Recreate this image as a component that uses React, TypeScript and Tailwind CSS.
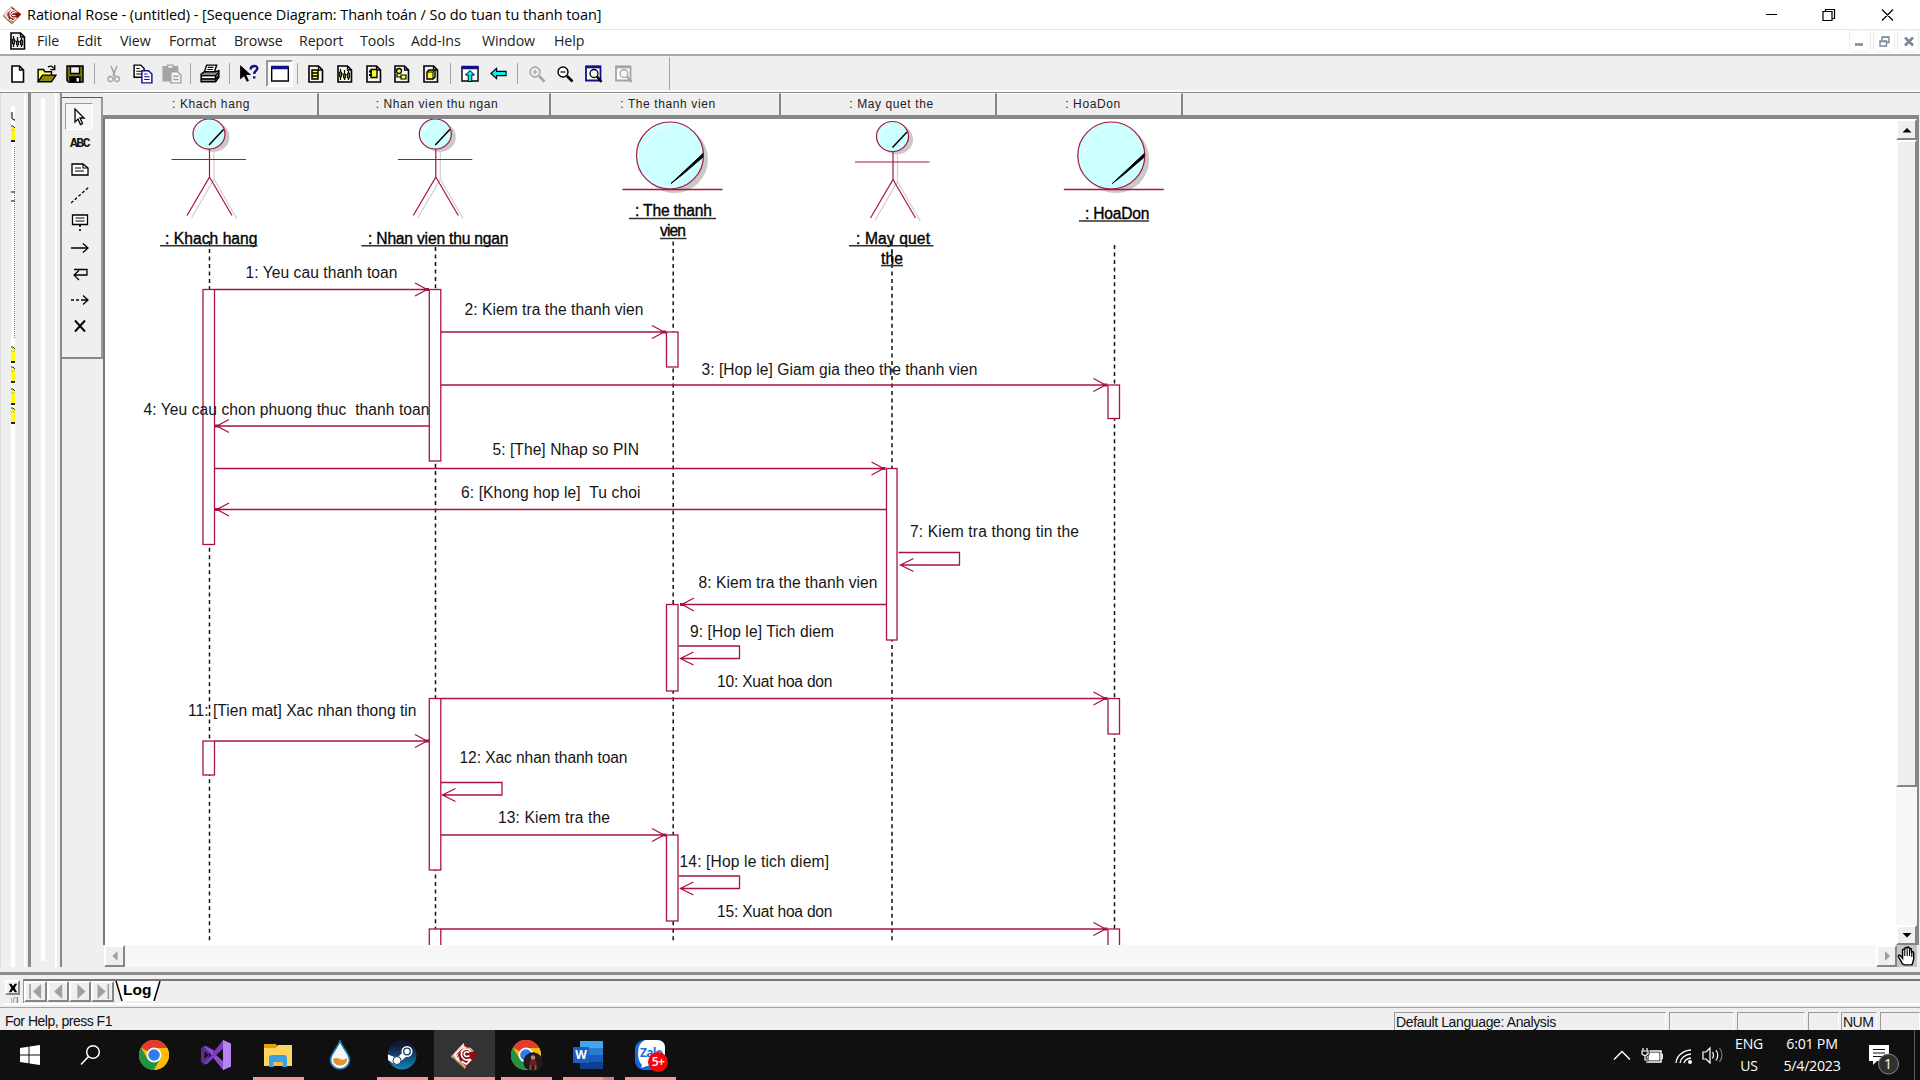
import React from "react";

type P = { children?: React.ReactNode; className?: string };

/* ---------- sequence diagram data ---------- */

const RED = "#a8143e";

type Msg = { t: string; x: number; w: number; by: number };
const labels: Msg[] = [
  { t: "1: Yeu cau thanh toan", x: 245.5, w: 152, by: 277.5 },
  { t: "2: Kiem tra the thanh vien", x: 464.5, w: 179, by: 315 },
  { t: "3: [Hop le] Giam gia theo the thanh vien", x: 701.5, w: 276, by: 375 },
  { t: "4: Yeu cau chon phuong thuc\u00a0 thanh toan", x: 143.5, w: 286, by: 415 },
  { t: "5: [The] Nhap so PIN", x: 492.5, w: 146.5, by: 455 },
  { t: "6: [Khong hop le]\u00a0 Tu choi", x: 461, w: 179.5, by: 497.5 },
  { t: "7: Kiem tra thong tin the", x: 910, w: 169, by: 536.5 },
  { t: "8: Kiem tra the thanh vien", x: 698.5, w: 179, by: 588 },
  { t: "9: [Hop le] Tich diem", x: 690, w: 144, by: 636.5 },
  { t: "10: Xuat hoa don", x: 717, w: 115.5, by: 686.5 },
  { t: "11: [Tien mat] Xac nhan thong tin", x: 188, w: 228.5, by: 715.5 },
  { t: "12: Xac nhan thanh toan", x: 459.5, w: 168, by: 763 },
  { t: "13: Kiem tra the", x: 498, w: 112, by: 823 },
  { t: "14: [Hop le tich diem]", x: 679.5, w: 149.5, by: 867 },
  { t: "15: Xuat hoa don", x: 717, w: 115.5, by: 917 },
];

const arrows: [number, number, number][] = [
  [215, 429, 289.5],
  [441, 666, 332],
  [441, 1107.5, 385],
  [429, 215, 426],
  [215, 885.5, 468.5],
  [886, 215, 509.5],
  [886, 680, 604.5],
  [441, 1107.5, 698.5],
  [215, 429, 741],
  [441, 666, 835],
  [441, 1107.5, 929],
];

const selfCalls: [number, number, number][] = [
  [898.5, 959.5, 552.5],
  [678.5, 739.5, 646],
  [440.5, 502, 782.5],
  [678.5, 739.5, 876],
];

const bars: [number, number, number][] = [
  [203, 289.5, 544.5],
  [203, 741, 775],
  [429.3, 289.5, 461],
  [429.3, 698.5, 870],
  [429.3, 929, 960],
  [666.5, 332, 367],
  [666.5, 604.5, 691],
  [666.5, 835, 921],
  [886.5, 468.5, 640],
  [1108, 385, 418.5],
  [1108, 698.5, 734],
  [1108, 929, 960],
];

const names: Msg[] = [
  { t: ": Khach hang", x: 165, w: 92.5, by: 244 },
  { t: ": Nhan vien thu ngan", x: 368, w: 140.5, by: 244 },
  { t: ": The thanh", x: 635, w: 77, by: 216 },
  { t: "vien", x: 660, w: 26, by: 236 },
  { t: ": May quet", x: 856, w: 74, by: 244 },
  { t: "the", x: 881, w: 22, by: 264 },
  { t: ": HoaDon", x: 1085, w: 64.5, by: 219 },
];
const underlines: [number, number, number][] = [
  [160, 257.5, 245.7],
  [361.5, 508, 245.7],
  [629, 716, 218.4],
  [660, 686.5, 238.5],
  [849, 933.5, 245.7],
  [881, 903, 265.6],
  [1079, 1149, 221],
];

function Actor({ x, y }: { x: number; y: number }) {
  return (
    <g fill="none" stroke={RED} strokeWidth="1.2">
      <ellipse cx={x + 4.5} cy={y + 3} rx="16" ry="15" fill="#c9c9c9" stroke="none" />
      <path d={`M${x + 5} ${y + 18}V${y + 45}L${x - 17.5} ${y + 84}M${x + 5} ${y + 45}L${x + 28} ${y + 85}`} stroke="#cfcfcf" />
      <ellipse cx={x} cy={y} rx="16" ry="15" fill="#ccffff" />
      <path d={`M${x - 11} ${y - 2}Q${x - 9} ${y - 10} ${x - 2} ${y - 11}`} stroke="#fff" />
      <path d={`M${x} ${y + 11}L${x + 14.5} ${y - 4.5}`} stroke="#000" strokeWidth="1.5" />
      <path d={`M${x + 0.5} ${y + 15}V${y + 43}L${x - 22} ${y + 81.5}M${x + 0.5} ${y + 43}L${x + 23} ${y + 81.5}M${x - 37.5} ${y + 25.5}H${x + 37}`} />
    </g>
  );
}

function Entity({ x }: { x: number }) {
  const y = 155.5;
  return (
    <g fill="none" stroke={RED} strokeWidth="1.2">
      <circle cx={x + 4.5} cy={y + 4} r="33.5" fill="#c9c9c9" stroke="none" />
      <circle cx={x} cy={y} r="33.5" fill="#ccffff" />
      <path d={`M${x - 27} ${y - 1}Q${x - 24} ${y - 25} ${x} ${y - 29}`} stroke="#fff4ee" />
      <path d={`M${x + 1} ${y + 28}L${x + 33} ${y - 2}L${x + 32.5} ${y + 2}L${x + 12} ${y + 19.5}Z`} fill="#000" stroke="#000" strokeWidth="1" />
      <path d={`M${x - 47.5} ${y + 34}H${x + 52.5}`} strokeWidth="1.5" />
    </g>
  );
}

function Diagram() {
  return (
    <svg width="1791" height="826" viewBox="105 119 1791 826" className="block font-['Liberation_Sans',sans-serif]">
      {([[209.5, 249], [435.5, 247], [673.2, 241.5], [892, 249], [1114.5, 245]] as const).map(([x, y]) => (
        <path key={x} d={`M${x} ${y}V943`} stroke="#111" strokeWidth="1.5" strokeDasharray="4 3.47" />
      ))}
      <path d="M209.5 241v4M892 241v5M892 251v4M892 257v5" stroke="#111" strokeWidth="1.5" />
      <Actor x={209} y={134} />
      <Actor x={435.3} y={134} />
      <Entity x={670} />
      <Actor x={892.5} y={136.5} />
      <Entity x={1111.3} />
      {bars.map(([x, a, b]) => (
        <rect key={`${x}-${a}`} x={x} y={a} width={x > 880 && x < 890 ? 10.5 : 11.5} height={b - a} fill="#fff" stroke={RED} strokeWidth="1.3" />
      ))}
      <g fill="none" stroke={RED} strokeWidth="1.3">
        {arrows.map(([a, b, y]) => {
          const s = a < b ? -1 : 1;
          return <path key={`${a}${y}`} d={`M${a} ${y}H${b}M${b + s * 14} ${y - 6.5}L${b + s * 2} ${y}L${b + s * 14} ${y + 6.5}M${b + s * 4} ${y - 0.8}H${b}M${b + s * 4} ${y + 0.8}H${b}`} />;
        })}
        {selfCalls.map(([a, b, y]) => (
          <path key={`${a}${y}`} d={`M${a} ${y}H${b}V${y + 12.5}H${a + 1.5}M${a + 15} ${y + 6}L${a + 2} ${y + 12.5}L${a + 15} ${y + 19}`} />
        ))}
      </g>
      <g fill="#151515" fontSize="15.6">
        {labels.map((m) => (
          <text key={m.t} x={m.x} y={m.by} textLength={m.w}>{m.t}</text>
        ))}
      </g>
      <g fill="#000" stroke="#000" strokeWidth="0.35" fontSize="15.6">
        {names.map((m) => (
          <text key={m.t} x={m.x} y={m.by} textLength={m.w}>{m.t}</text>
        ))}
      </g>
      {underlines.map(([a, b, y]) => (
        <path key={`${a}${y}`} d={`M${a} ${y}H${b}`} stroke="#2c332c" strokeWidth="1.5" />
      ))}
    </svg>
  );
}

/* ---------- icons ---------- */

function Ico({ children, s = 18, vb = "0 0 18 18" }: { children: React.ReactNode; s?: number; vb?: string }) {
  return (
    <svg width={s} height={s} viewBox={vb} fill="none" stroke="#000" strokeWidth="1.3" className="shrink-0">
      {children}
    </svg>
  );
}

const Page = ({ children }: P) => (
  <Ico>
    <path d="M2 1h9.500l4 4v12H2z" fill="#f7f7f0" strokeWidth="1.6" />
    <path d="M11.500 1v4h4" />
    {children}
  </Ico>
);

const SeqPage = () => (
  <Page>
    <path d="M4.500 4v11M8.500 5v10M12.500 6v9" strokeWidth="1.2" />
    <path d="M3.600 7h2v5h-2zM7.600 9h2v4h-2zM11.600 8h2v5h-2z" fill="#7c7c14" strokeWidth="1" />
    <path d="M5 8l3 2M9.500 10.500l2.500-2" strokeWidth="1" />
  </Page>
);

const RoseLogo = ({ s = 20 }: { s?: number }) => (
  <svg width={s} height={s} viewBox="0 0 30 30" className="shrink-0">
    <path d="M14 2L29 14 15 29 1 16z" fill="#8a0f0f" />
    <path d="M14 2L1 16l2 2L15 5z" fill="#f3d6cb" />
    <path d="M1 16l14 13 2-2.500L4 14z" fill="#c9ab80" />
    <path d="M2.500 17l12 11" stroke="#5c5a20" strokeWidth="1" />
    <path d="M4 15L14 5l4 2-5 2-4 5 1 7-2 0z" fill="#fff" opacity="0.850" />
    <path d="M7 14l6-6M8 17l2-6" stroke="#8a0f0f" strokeWidth="1" />
    <path d="M22 11c-3-4-9-3-10 1-1 5 3 9 9 7M20 12c-4-2-6 0-5 2.500 1 2 4 2 5 .5M12 21l5 3 5-5" fill="none" stroke="#fff" strokeWidth="1.700" />
    <path d="M17 8c4-2 6 1 7 3" fill="none" stroke="#e9b7b0" strokeWidth="1.200" />
  </svg>
);

const Chrome = () => (
  <svg width="30" height="30" viewBox="0 0 30 30">
    <circle cx="15" cy="15" r="15" fill="#fbbc09" />
    <path d="M15 15L2 7.500A15 15 0 0128 7.500z" fill="#e33b2e" />
    <path d="M2 7.500A15 15 0 0015 30L21.500 18.700 15 15 8.500 18.800z" fill="#229342" />
    <path d="M15 8h13.300A15 15 0 0115 30l6.500-11.300z" fill="#fbbc09" />
    <circle cx="15" cy="15" r="7.400" fill="#fff" />
    <circle cx="15" cy="15" r="5.800" fill="#2f7de9" />
  </svg>
);

/* ---------- window parts ---------- */

const Slot = ({ w, children }: { w: number; children?: React.ReactNode }) => (
  <div className="flex h-full shrink-0 items-center justify-center" style={{ width: w }}>{children}</div>
);
const Sep = () => <div className="h-[21px] w-px bg-[#a3a3a3]" />;

function Btn({ children, className = "" }: P) {
  return (
    <div className={`flex shrink-0 items-center justify-center border-2 border-t-white border-l-white border-r-[#858585] border-b-[#858585] bg-[#efefef] ${className}`}>
      {children}
    </div>
  );
}

const Tri = ({ d, c = "#a0a0a0", s = 12 }: { d: string; c?: string; s?: number }) => (
  <svg width={s} height={s} viewBox="0 0 12 12" className="shrink-0"><path d={d} fill={c} /></svg>
);

function MagIcon({ c = "#000", sign, lens = "none" }: { c?: string; sign: string; lens?: string }) {
  return (
    <Ico>
      <circle cx="7" cy="7" r="5" stroke={c} strokeWidth="1.4" fill={lens} />
      <path d="M11 11l5.500 5.500" stroke={c} strokeWidth="2.600" />
      <path d={sign} stroke={c} strokeWidth="1.200" />
    </Ico>
  );
}

function FitPage({ c, b }: { c: string; b: string }) {
  return (
    <Ico>
      <path d="M1 1.500h14.500v14H1z" fill="#fff" stroke={b} strokeWidth="1.800" />
      <path d="M1 2h15" stroke={b} strokeWidth="2.600" />
      <circle cx="9" cy="8.500" r="4" stroke={c} fill="#f4f4f4" />
      <path d="M12 11.500l4.500 5.500" stroke={c} strokeWidth="2.400" />
    </Ico>
  );
}

function Toolbar() {
  const g = "#a4a4a4";
  return (
    <div className="flex h-[38px] shrink-0 items-center border-t-2 border-b-2 border-t-[#a9a9a9] border-b-[#f9f9f9] bg-[#efefef] pt-px pl-1">
      <Slot w={28}><Ico><path d="M3 1h7.500l4 4v12H3z" fill="#fff" strokeWidth="1.600" /><path d="M10.500 1v4h4" /></Ico></Slot>
      <Slot w={30}><Ico s={20}><path d="M1 16V5h5l1 2h6v3" fill="#ffff66" /><path d="M1 16l4-6h12l-4 6z" fill="#8a8a10" /><path d="M10 3c2-2 4-1 5 1M16 1v4h-4" strokeWidth="1.200" /></Ico></Slot>
      <Slot w={26}><Ico><path d="M1 1h16v16H2.500L1 15.500z" fill="#7a7a08" strokeWidth="1.500" /><path d="M4.500 1.500h9v7h-9z" fill="#efefef" /><path d="M4 12h10v5H4z" fill="#000" /><path d="M10.500 13h2.500v3.500h-2.500z" fill="#fff" stroke="none" /></Ico></Slot>
      <Slot w={12}><Sep /></Slot>
      <Slot w={28}><Ico><path d="M6 1l4 10M12 1L8 11" stroke={g} strokeWidth="1.600" /><circle cx="5.500" cy="14" r="2.500" stroke={g} /><circle cx="12" cy="14" r="2.500" stroke={g} /></Ico></Slot>
      <Slot w={30}><Ico s={20}><path d="M1 1h6l3 3v8H1z" fill="#fff" /><path d="M3 4h3M3 6.500h5M3 9h5" strokeWidth="1" /><path d="M8 6h6l3 3v8H8z" fill="#fff" stroke="#12128a" /><path d="M10 9h3M10 11.500h5M10 14h5" stroke="#12128a" strokeWidth="1" /></Ico></Slot>
      <Slot w={28}><Ico s={20}><path d="M1 2.500h13V15H1z" fill={g} stroke={g} /><path d="M5 1h5v3H5z" fill="#efefef" stroke={g} /><path d="M8 7h6l3 3v7H8z" fill="#f5f5f5" stroke={g} /><path d="M10 11h5M10 14h5" stroke={g} /></Ico></Slot>
      <Slot w={8}><Sep /></Slot>
      <Slot w={32}><Ico s={20}><path d="M6 1h9l-2 6H4z" fill="#fff" /><path d="M7 3h5M6.500 5h5" strokeWidth="1" /><path d="M1 9l3-2h10l3-1v6l-3 4H1z" fill="#8c8c8c" /><path d="M1 10.500h13l3-3M1 13.500h13l3-3M14 10v6" strokeWidth="1.200" /><path d="M2 12h11" stroke="#fff" strokeWidth="1.200" /></Ico></Slot>
      <Slot w={6}><Sep /></Slot>
      <Slot w={34}><Ico s={20}><path d="M1 1v13l3.500-3 2.500 5 2-1-2.500-5H11z" fill="#000" stroke="none" /><path d="M10.500 5c0-4 6-4 6-1 0 2-2.800 2-2.800 5M13.700 11v2" stroke="#12128a" strokeWidth="2.200" /></Ico></Slot>
      <div className="flex h-[27px] w-[27px] shrink-0 items-center justify-center border-2 border-t-[#999] border-l-[#999] border-r-white border-b-white bg-[#f7f7f7]">
        <Ico><path d="M.7 2h16.600v14H.7z" fill="#fff" strokeWidth="1.400" /><path d="M.5 2.500h17" stroke="#10108a" strokeWidth="3.500" /></Ico>
      </div>
      <Slot w={8}><Sep /></Slot>
      <Slot w={29}><Page><path d="M5 5h6v9H5zM5 8h6M5 11h6" fill="#ffff22" strokeWidth="1.500" /></Page></Slot>
      <Slot w={29}><SeqPage /></Slot>
      <Slot w={29}><Page><path d="M6 4.500h6v8H6z" fill="#ffff22" strokeWidth="1.400" /><path d="M4 6.500h3M4 10h3" strokeWidth="2" /></Page></Slot>
      <Slot w={28}><Page><circle cx="6" cy="6" r="2.500" fill="#ffff22" /><path d="M8 10h5v4H8zM4 9v3h4" fill="#ffff22" strokeWidth="1.200" /></Page></Slot>
      <Slot w={29}><Page><path d="M5 7l2-2h6v7l-2 2H5z" fill="#ffff22" strokeWidth="1.400" /><path d="M5 7h6v7M11 7l2-2" strokeWidth="1" /></Page></Slot>
      <Slot w={10}><Sep /></Slot>
      <Slot w={29}><Ico><path d="M1 2h16v14H1z" fill="#fff" strokeWidth="1.400" /><path d="M.5 2.500h17" stroke="#10108a" strokeWidth="3.500" /><path d="M9 5.500l4.500 4.500h-2.700v6.500H7.200V10H4.500z" fill="#00f0f0" strokeWidth="1" /></Ico></Slot>
      <Slot w={28}><Ico s={17}><path d="M1 9l6-5.500v3.200h10v4.600H7v3.200z" fill="#00f0f0" strokeWidth="1.200" /></Ico></Slot>
      <Slot w={10}><Sep /></Slot>
      <Slot w={29}><MagIcon c={g} sign="M4.500 7h5M7 4.500v5" /></Slot>
      <Slot w={27}><MagIcon sign="M4.500 7h5" lens="#fff" /></Slot>
      <Slot w={32}><FitPage c="#000" b="#10108a" /></Slot>
      <Slot w={28}><FitPage c={g} b={g} /></Slot>
      <div className="ml-[31px] h-full w-px bg-[#a3a3a3]" />
    </div>
  );
}

const menus: [string, number][] = [["File", 40], ["Edit", 43], ["View", 49], ["Format", 65], ["Browse", 65], ["Report", 61], ["Tools", 51], ["Add-Ins", 71], ["Window", 72], ["Help", 60]];

const participants: [string, number, number][] = [
  [": Khach hang", 216, 2],
  [": Nhan vien thu ngan", 232, 6],
  [": The thanh vien", 230, 6],
  [": May quet the", 216, 7],
  [": HoaDon", 186, 8],
];

function BrowserStrip() {
  const icons = [35, 256, 276, 298, 317];
  return (
    <div className="flex h-full w-[28px] shrink-0 border-l border-[#dcdcdc] pl-[10px]">
      <svg width="4" height="862" viewBox="0 0 4 862" className="mt-[13px]">
        <path d="M0 0h4v862H0z" fill="#fff" />
        <path d="M1 6v6q1 2 3 2" stroke="#333" fill="none" strokeWidth="1.300" />
        {icons.map((y) => (
          <g key={y}>
            <path d={`M0 ${y - 14}h4v14H0z`} fill="#ffff00" />
            <path d={`M0 ${y - 15}h2l2 2`} stroke="#222" fill="none" />
            <path d={`M0 ${y - 11}h4`} stroke="#bbb" />
            <path d={`M0 ${y}h4`} stroke="#222" strokeWidth="2" />
          </g>
        ))}
        <path d="M3.500 41V232" stroke="#777" strokeDasharray="1 1" />
        <path d="M0 86h4M0 95h4" stroke="#555" strokeWidth="1.300" />
      </svg>
      <div className="ml-[9px] w-[2px] bg-white" />
    </div>
  );
}

function Toolbox() {
  const cell = "flex h-[26.200px] items-center justify-center pr-[3px]";
  return (
    <div className="flex w-[41px] shrink-0 flex-col">
      <div className="mt-[4px] h-[262px] border-t border-r-2 border-b-2 border-t-[#555] border-r-[#999] border-b-[#888] pt-[5px]">
        <div className="ml-[3px] flex h-[27px] w-[28px] items-center justify-center border border-t-[#999] border-l-[#999] border-r-white border-b-white bg-[#f6f6f6]">
          <Ico><path d="M5 1v13l3-3 2.500 5.500 2-1L10 10h4z" fill="#fff" strokeWidth="1.300" /></Ico>
        </div>
        <div className={cell}><span className="pt-[2px] pr-[1px] font-['Liberation_Mono',monospace] text-[13px] font-bold tracking-[-1.500px] text-[#111]">ABC</span></div>
        <div className={cell}><Ico><path d="M1 4h11l5 4v7H1z" fill="#fff" /><path d="M12 4v4h5M4 8h6M4 11h9" strokeWidth="1.100" /></Ico></div>
        <div className={cell}><Ico><path d="M0 17L18 1" strokeDasharray="3 2" /></Ico></div>
        <div className={cell}><Ico><path d="M1.500 2h15v9.500h-15z" fill="#fff" /><path d="M4.500 5h9M4.500 8h9" strokeWidth="1.100" /><path d="M9 12v6" strokeDasharray="2 2" strokeWidth="1.600" /></Ico></div>
        <div className={cell}><Ico><path d="M0 9h17M12 4.500L17 9l-5 4.500" /></Ico></div>
        <div className={cell}><Ico><path d="M3 4.500h13V10H3M8 5.500L3 10l5 5" /></Ico></div>
        <div className={cell}><Ico><path d="M0 9h12" strokeDasharray="3 2" /><path d="M12 4.500L17 9l-5 4.500M12 9h4" /></Ico></div>
        <div className={cell}><Ico><path d="M4 3.500l10 11M14 3.500L4 14.500" strokeWidth="1.900" /></Ico></div>
      </div>
    </div>
  );
}

function Workspace() {
  return (
    <div className="flex h-[875px] shrink-0 border-t border-[#8d8d8d] bg-[#efefef]">
      <BrowserStrip />
      <div className="w-[3px] bg-[#8a8a8a]" />
      <div className="flex w-[29px] pl-[10px]">
        <div className="mt-[5px] h-[863px] w-[4px] bg-white" />
        <div className="ml-[10px] w-[2px] bg-white" />
      </div>
      <div className="w-[2px] bg-[#888]" />
      <Toolbox />
      <div className="flex w-[1816px] flex-col border-b border-[#dedede]">
        <div className="flex h-[22px] shrink-0">
          {participants.map(([n, w, shift]) => (
            <div key={n} className="flex items-center justify-center border-t border-r-2 border-t-white border-r-[#858585] pb-px font-['Liberation_Sans',sans-serif] text-[12px] tracking-[0.600px] text-[#222]" style={{ width: w, paddingLeft: shift }}>
              {n}
            </div>
          ))}
        </div>
        <div className="h-[4px] shrink-0 bg-[#868686]" />
        <div className="flex h-[826px] shrink-0 border-l-2 border-[#777] bg-white">
          <Diagram />
          <div className="flex w-[21px] flex-col bg-[#f7f7f7]">
            <Btn className="h-[21px]"><Tri d="M1.500 8.500L6 4l4.500 4.500z" c="#000" /></Btn>
            <Btn className="h-[647px]" />
            <div className="flex-1 bg-[#f7f7f7]" />
            <Btn className="h-[20px]"><Tri d="M1.500 4L6 8.500 10.500 4z" c="#000" /></Btn>
          </div>
          <div className="w-[2px] bg-[#858585]" />
        </div>
        <div className="flex h-[22px] shrink-0 pl-px">
          <Btn className="w-[21px]"><Tri d="M8.500 1v10L3.500 6z" /></Btn>
          <div className="flex-1 bg-[#f7f7f7]" />
          <Btn className="w-[21px]"><Tri d="M4 1v10l5-5z" /></Btn>
          <div className="mr-[2px] flex w-[20px] items-center justify-center bg-[#c4c4c4]">
            <Ico s={20}><path d="M5 16L1.500 10c-1-2 1-2 2-1L5 11V4c0-1.500 2-1.500 2 0V2.500c0-1.500 2-1.500 2 0V2c0-1.500 2-1.500 2 0v1c0-1 2-1 2 .5V6c0-1.200 2-1.200 2 0v6l-1.500 5h-7z" fill="#fff" /><path d="M7 4v5M9.200 3v6M11.300 3v6M13.300 5v5" strokeWidth="1" /></Ico>
          </div>
        </div>
      </div>
    </div>
  );
}

function LogBar() {
  return (
    <div className="flex h-[41px] shrink-0 flex-col border-b border-[#a2a2a2] bg-[#efefef]">
      <div className="mt-[5px] h-[3px] shrink-0 bg-[#8a8a8a]" />
      <div className="flex h-[28px] pt-[4px] pl-[5px]">
        <div className="flex w-[16px] shrink-0 flex-col gap-[2px] pt-px">
          <Btn className="h-[15px] w-[15px]"><Tri s={10} d="M1 1h3l2 3 2-3h3L8 6l3 5H8L6 8l-2 3H1l3-5z" c="#000" /></Btn>
          <svg width="15" height="8" viewBox="0 0 15 8" fill="none" stroke="#888"><path d="M5 1q3 3 1 7M12 1H9v7" /><path d="M14 0v8" strokeWidth="2" /></svg>
        </div>
        <div className="ml-[2px] flex h-[24px] flex-1 border-t-2 border-l border-t-[#777] border-l-[#999]">
          <Btn className="h-[21px] w-[23px]"><Tri s={15} d="M1 0h1.300v12H1zM10.500 0v12L4 6z" /></Btn>
          <Btn className="h-[21px] w-[22px]"><Tri s={15} d="M9 0v12L2.500 6z" /></Btn>
          <Btn className="h-[21px] w-[22px]"><Tri s={15} d="M3.500 0v12L10 6z" /></Btn>
          <Btn className="h-[21px] w-[23px]"><Tri s={15} d="M10 0h1.300v12H10zM2 0v12l6.500-6z" /></Btn>
          <div className="flex h-[20px] items-center bg-white">
            <svg width="9" height="20" viewBox="0 0 9 20"><path d="M0 0l7 20H0z" fill="#efefef" /><path d="M2 0l6 20" stroke="#000" strokeWidth="1.500" /></svg>
            <span className="w-[30px] pb-[3px] font-['Liberation_Sans',sans-serif] text-[15.500px] font-bold leading-none text-black">Log</span>
            <svg width="9" height="20" viewBox="0 0 9 20"><path d="M7 0L1 20h8V0z" fill="#efefef" /><path d="M7 0L1 20" stroke="#000" strokeWidth="1.500" /></svg>
          </div>
        </div>
      </div>
      <div className="ml-[3px] h-[2px] shrink-0 bg-white" />
    </div>
  );
}

function StatusBar() {
  const pane = "h-[18px] overflow-hidden border-t-[1.500px] border-l-[1.500px] border-r border-t-[#999] border-l-[#999] border-r-white";
  return (
    <div className="flex h-[22px] shrink-0 items-end overflow-hidden bg-[#efefef] font-['Liberation_Sans',sans-serif] text-[14px] leading-[18px] tracking-[-0.500px] text-[#111]">
      <div className="w-[1394px] pl-[5px]">For Help, press F1</div>
      <div className={`${pane} w-[272px] pl-px tracking-[-0.380px]`}>Default Language: Analysis</div>
      <div className={`${pane} ml-[3px] w-[65px]`} />
      <div className={`${pane} ml-[3px] w-[68px]`} />
      <div className={`${pane} ml-[3px] w-[31px]`} />
      <div className={`${pane} ml-[2px] w-[36px] pl-px`}>NUM</div>
      <div className={`${pane} ml-[3px] w-[40px]`} />
    </div>
  );
}

function Task({ children, line = "", w = "w-[62px]", dual = false }: P & { line?: string; w?: string; dual?: boolean }) {
  return (
    <div className={`flex h-[50px] shrink-0 flex-col items-center ${w}`}>
      <div className="flex h-[47px] items-center justify-center pt-[3px]">{children}</div>
      <div className={`flex h-[3px] justify-end ${line}`}>{dual && <div className="w-[11px] bg-[#cf7f86]" />}</div>
    </div>
  );
}

function Taskbar() {
  const on = "w-[51px] bg-[#ff959c]";
  return (
    <div className="flex h-[50px] shrink-0 items-center bg-[#101010] font-['Open_Sans',sans-serif] text-white">
      <Task w="w-[60px]"><svg width="20" height="20" viewBox="0 0 20 20"><path d="M0 3l8.500-1.300v7.800H0zM9.500 1.500L20 0v9.500H9.500zM0 10.500h8.500v7.800L0 17zM9.500 10.500H20V20L9.500 18.500z" fill="#fff" /></svg></Task>
      <Task w="w-[60px]"><svg width="22" height="22" viewBox="0 0 22 22" fill="none" stroke="#fff" strokeWidth="1.500"><circle cx="14" cy="8" r="6.300" /><path d="M9.500 12.500L2 20.500" /></svg></Task>
      <div className="w-[2px]" />
      <Task w="w-[63px]"><Chrome /></Task>
      <Task>
        <svg width="30" height="30" viewBox="0 0 30 30">
          <path d="M0 8l3-2 5 4.500V20l-5 4.500L0 22z" fill="#5b2c93" />
          <path d="M3 6L22 30l8-4V20L5 6z" fill="#8b4fd0" />
          <path d="M3 24.500L22 0v9L6 24z" fill="#7a3cc0" />
          <path d="M22 0l8 3.500v23L22 30z" fill="#b583f2" />
          <path d="M22 9v12l-7-6z" fill="#101010" /><path d="M3.500 11v8l4-4z" fill="#101010" />
        </svg>
      </Task>
      <Task line={on}>
        <svg width="28" height="24" viewBox="0 0 28 24"><path d="M0 1h12l2 3v4H0z" fill="#e3a008" /><path d="M0 5h12l2-3h14v21H0z" fill="#ffd55e" /><path d="M5 24V15q0-3 3-3h12q3 0 3 3v9h-4.500v-5h-9v5z" fill="#3aa0e3" /><path d="M9.500 19h9v4h-9z" fill="#f5bd3b" /></svg>
      </Task>
      <Task>
        <svg width="22" height="30" viewBox="0 0 22 30"><path d="M11 1C8 9 1.500 14 1.500 20a9.500 9 0 0019 0C20.500 14 14 9 11 1z" fill="#f3f5ff" stroke="#1f7fae" strokeWidth="1.600" /><path d="M4 19q4-2 7 0t7-1q1 5-4 7-9 2-10-6z" fill="#e0942c" /></svg>
      </Task>
      <Task line={on}>
        <svg width="30" height="30" viewBox="0 0 30 30">
          <defs><linearGradient id="st" x1="0" y1="0" x2="0" y2="1"><stop offset="0.200" stopColor="#151a3c" /><stop offset="1" stopColor="#1387b8" /></linearGradient></defs>
          <circle cx="15" cy="15" r="14.500" fill="url(#st)" />
          <path d="M1 14.500l9 3.500 6-6 4 4-6 5-5 4-8-5z" fill="#fff" />
          <circle cx="20" cy="11.500" r="5.500" fill="#fff" /><circle cx="20" cy="11.500" r="3.300" fill="#fff" stroke="#173a64" strokeWidth="1.300" />
          <circle cx="10" cy="20.500" r="4" fill="#fff" stroke="#173a64" strokeWidth="1" />
        </svg>
      </Task>
      <div className="ml-px bg-[#333333]"><Task w="w-[61px]" line="w-[61px] bg-[#ff959c]"><RoseLogo s={29} /></Task></div>
      <Task line={on}>
        <div className="relative h-[30px] w-[30px]">
          <Chrome />
          <svg width="20" height="20" viewBox="0 0 20 20" className="absolute top-[12px] left-[12px]"><circle cx="10" cy="10" r="9.700" fill="#231820" /><path d="M7 8q3-2 6 0l1 5H6z" fill="#6b1c25" /><circle cx="10" cy="5.500" r="2.200" fill="#b78a70" /><path d="M7.500 13v5M12.500 13v5" stroke="#8c5a2a" strokeWidth="1.800" /></svg>
        </div>
      </Task>
      <Task line={on} dual>
        <svg width="30" height="28" viewBox="0 0 30 28"><path d="M7 0h23v7H7z" fill="#41a5ee" /><path d="M7 7h23v7H7z" fill="#2b7cd3" /><path d="M7 14h23v7H7z" fill="#185abd" /><path d="M7 21h23v7H7z" fill="#103f91" /><rect y="6" width="16" height="16" rx="1" fill="#1c5fc4" /><text x="8" y="18.300" textAnchor="middle" fontSize="12" fontWeight="700" fill="#fff">W</text></svg>
      </Task>
      <Task line={on}>
        <div className="relative h-[30px] w-[30px]">
          <svg width="30" height="30" viewBox="0 0 30 30"><rect width="30" height="30" rx="9" fill="#1268e8" /><path d="M10 0h12q8 0 8 8v13q0 5-7 5H12l-6 2 1-3Q3 21 3 13 3 3 10 0z" fill="#fff" /><text x="5" y="17" fontSize="12" fontWeight="700" textLength="23" fill="#1a6eea">Zalo</text></svg>
          <div className="absolute top-[12px] left-[13px] flex h-[20px] w-[20px] items-center justify-center rounded-full bg-[#f80404] text-[12px] font-semibold tracking-[-0.500px]">5+</div>
        </div>
      </Task>
      <div className="flex-1" />
      <svg width="118" height="24" viewBox="0 0 118 24" fill="none" stroke="#fff" strokeWidth="1.500" className="mr-[3px] shrink-0">
        <path d="M4 16.500l8-8 8 8" />
        <path d="M37 8h14v11H37z" /><path d="M38.500 9.500h11v8h-11z" fill="#fff" stroke="none" /><path d="M51.500 11h1v5h-1" fill="#fff" strokeWidth="0.800" /><path d="M33 5v3M37 5v3M32 8h6v3l-3 2-3-2zM35 13v4h3" stroke="#101010" strokeWidth="3" /><path d="M33 5v3M37 5v3M32 8h6v3l-3 2-3-2zM35 13v4h3" strokeWidth="1.200" />
        <path d="M66 20A16 14 0 0181 7M70 20A12 10 0 0181 11M74 20A8 7 0 0181 15" strokeWidth="1.300" /><circle cx="80" cy="19" r="2" fill="#fff" stroke="none" />
        <path d="M93 9h3l4-4v15l-4-4h-3z" strokeWidth="1.200" /><path d="M102.500 9q2 3 0 6.500M106 7q3.500 5 0 10.500" strokeWidth="1.200" /><path d="M109.500 5q5 7 0 14" stroke="#777" strokeWidth="1.200" />
      </svg>
      <div className="-ml-px flex w-[38px] shrink-0 flex-col items-center text-[14px] leading-[22px] tracking-[-0.200px]"><span>ENG</span><span>US</span></div>
      <div className="ml-[11px] flex w-[66px] shrink-0 flex-col items-center text-[14.200px] leading-[22px] tracking-[-0.250px]"><span>6:01 PM</span><span>5/4/2023</span></div>
      <div className="relative ml-[23px] h-[40px] w-[46px] shrink-0">
        <svg width="34" height="40" viewBox="0 0 34 40"><path d="M1 10h20v16H9l-4 4v-4H1z" fill="#fff" /><path d="M5 14.500h12M5 18h12M5 21.500h9" stroke="#111" strokeWidth="1.200" /><circle cx="20.500" cy="29" r="10" fill="#303030" stroke="#888" /></svg>
        <span className="absolute top-[18px] left-[16px] text-[14px] leading-[22px]">1</span>
      </div>
      <div className="mr-[5px] h-[50px] w-px bg-[#5c5c5c]" />
    </div>
  );
}

export default function App() {
  return (
    <div className="flex h-[1080px] w-[1920px] flex-col overflow-hidden bg-[#efefef]">
      <header className="flex h-[29px] shrink-0 items-center bg-white pl-[2px]">
        <RoseLogo />
        <span className="ml-[5px] font-['Open_Sans',sans-serif] text-[14.500px] tracking-[-0.070px] whitespace-nowrap text-black">Rational Rose - (untitled) - [Sequence Diagram: Thanh toán / So do tuan tu thanh toan]</span>
        <div className="flex-1" />
        <svg width="154" height="28" viewBox="0 0 154 28" fill="none" stroke="#000" strokeWidth="1.200"><path d="M-1 13.500h12M57 10.500h9v9h-9zM59.500 10.500v-2h9v9h-2.500M116 8.500l11 11M127 8.500l-11 11" /></svg>
      </header>
      <nav className="flex h-[25px] shrink-0 items-center border-t border-[#e3e3e3] bg-white pb-[2px] pl-[9px]">
        <SeqPage />
        <div className="ml-[10px] flex font-['Open_Sans',sans-serif] text-[14.200px] tracking-[-0.100px] text-[#222]">
          {menus.map(([m, w]) => <span key={m} style={{ width: w }}>{m}</span>)}
        </div>
        <div className="flex-1" />
        <svg width="71" height="24" viewBox="0 0 71 24" fill="none">
          <path d="M.5 1h21v22H.5zM24.500 1h21v22h-21zM48.500 1h21v22h-21z" stroke="#ececec" />
          <path d="M6 15.500h8" stroke="#78879a" strokeWidth="2.500" />
          <path d="M31 12h6.500v5H31zM33 11V8h7v5.500h-2M31 12.500h6.500M33 8.300h7" stroke="#78879a" strokeWidth="1.400" />
          <path d="M56 8.500l8 8M64 8.500l-8 8" stroke="#78879a" strokeWidth="2.600" />
        </svg>
      </nav>
      <Toolbar />
      <Workspace />
      <LogBar />
      <StatusBar />
      <Taskbar />
    </div>
  );
}
